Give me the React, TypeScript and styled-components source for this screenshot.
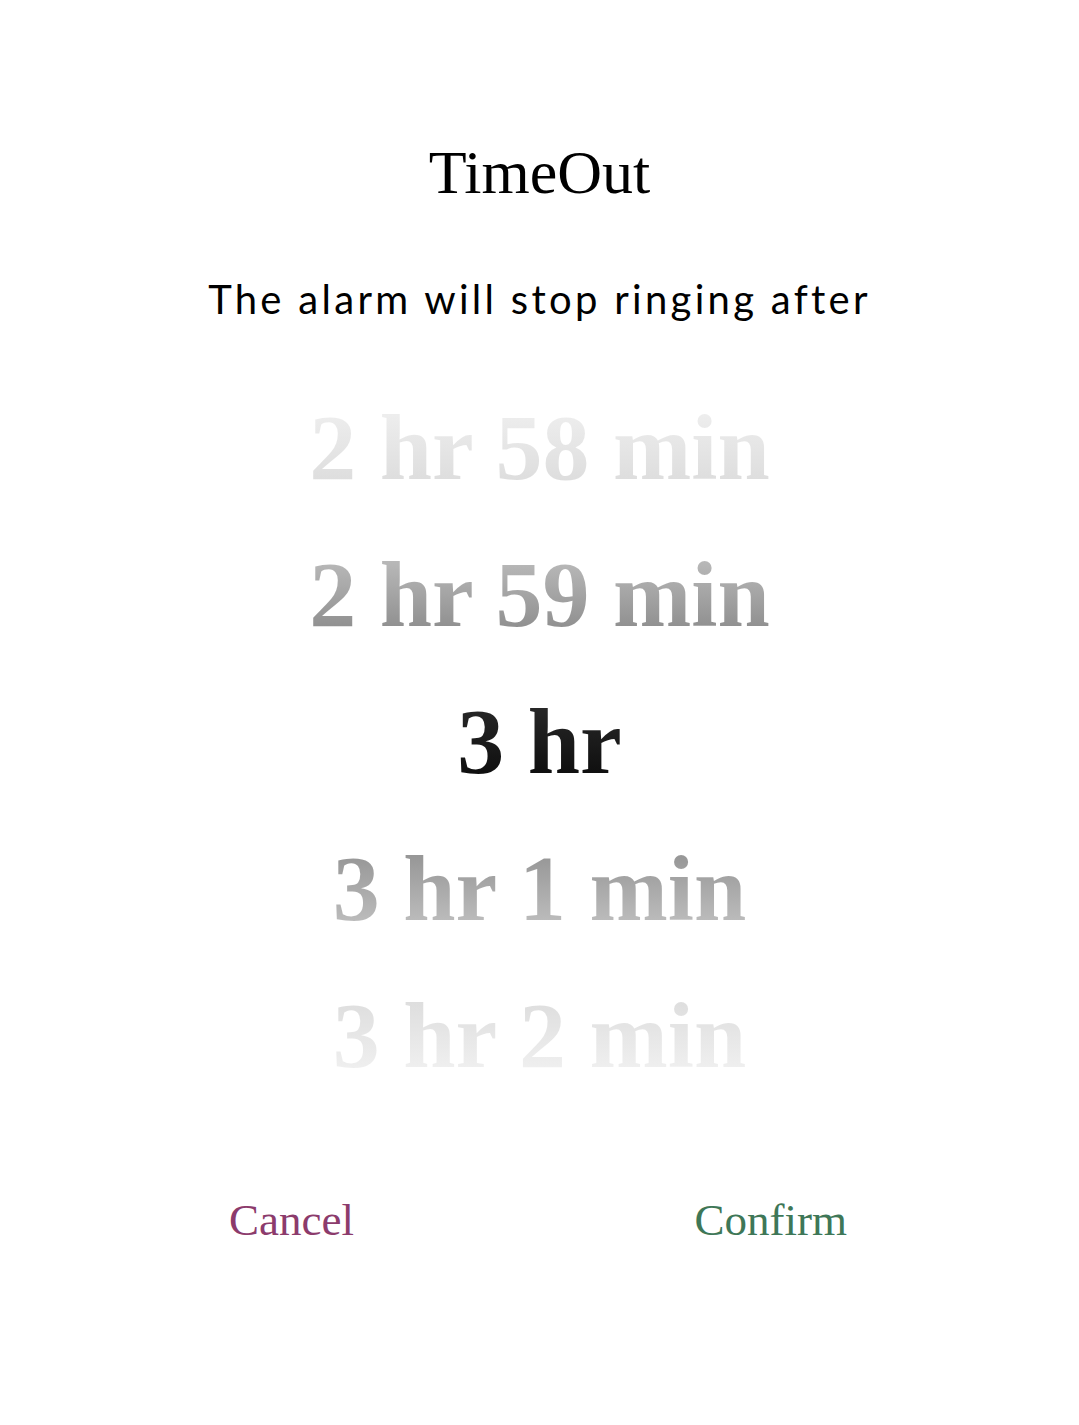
import React from "react";
import styled, { createGlobalStyle } from "styled-components";

const Global = createGlobalStyle`
  html, body { margin: 0; padding: 0; background: #ffffff; }
  body { -webkit-font-smoothing: antialiased; }
`;

const Page = styled.main`
  width: 1079px;
  min-height: 1425px;
  display: flex;
  flex-direction: column;
  align-items: stretch;
  background: #ffffff;
`;

const Title = styled.h1`
  margin: 137px 0 0;
  font-family: "Liberation Serif", "DejaVu Serif", serif;
  font-weight: 400;
  font-size: 62px;
  line-height: 70px;
  text-align: center;
  color: #000;
`;

const Subtitle = styled.p`
  margin: 68px 0 0;
  font-family: Lato, "Noto Sans", sans-serif;
  font-size: 40px;
  line-height: 48px;
  letter-spacing: 3.3px;
  text-align: center;
  color: #000;
`;

const Wheel = styled.div`
  margin-top: 51px;
  display: flex;
  flex-direction: column;
  align-items: center;
`;

const Row = styled.div`
  height: 147px;
  line-height: 147px;
  font-family: "Liberation Serif", "DejaVu Serif", serif;
  font-weight: 700;
  font-size: 94px;
  white-space: nowrap;
  text-align: center;
`;

const Label = styled.span<{ $from: string; $to: string }>`
  background: linear-gradient(to bottom, ${(p) => p.$from}, ${(p) => p.$to});
  -webkit-background-clip: text;
  background-clip: text;
  color: transparent;
  -webkit-text-fill-color: transparent;
`;

const Actions = styled.div`
  margin-top: 84px;
  padding: 0 232px 0 229px;
  display: flex;
  justify-content: space-between;
`;

const Action = styled.button<{ $color: string }>`
  border: none;
  background: none;
  padding: 0;
  cursor: pointer;
  font-family: "Liberation Serif", "DejaVu Serif", serif;
  font-size: 45px;
  line-height: 54px;
  color: ${(p) => p.$color};
`;

const rows = [
  { text: "2 hr 58 min", from: "#f2f2f2", to: "#d9d9d9" },
  { text: "2 hr 59 min", from: "#c4c4c4", to: "#858585" },
  { text: "3 hr", from: "#2e2e2e", to: "#080808" },
  { text: "3 hr 1 min", from: "#8c8c8c", to: "#c6c6c6" },
  { text: "3 hr 2 min", from: "#d9d9d9", to: "#f4f4f4" },
];

export default function App() {
  return (
    <>
      <Global />
      <Page>
        <Title>TimeOut</Title>
        <Subtitle>The alarm will stop ringing after</Subtitle>
        <Wheel>
          {rows.map((r) => (
            <Row key={r.text}>
              <Label $from={r.from} $to={r.to}>
                {r.text}
              </Label>
            </Row>
          ))}
        </Wheel>
        <Actions>
          <Action $color="#8c3b6c">Cancel</Action>
          <Action $color="#3e7757">Confirm</Action>
        </Actions>
      </Page>
    </>
  );
}
